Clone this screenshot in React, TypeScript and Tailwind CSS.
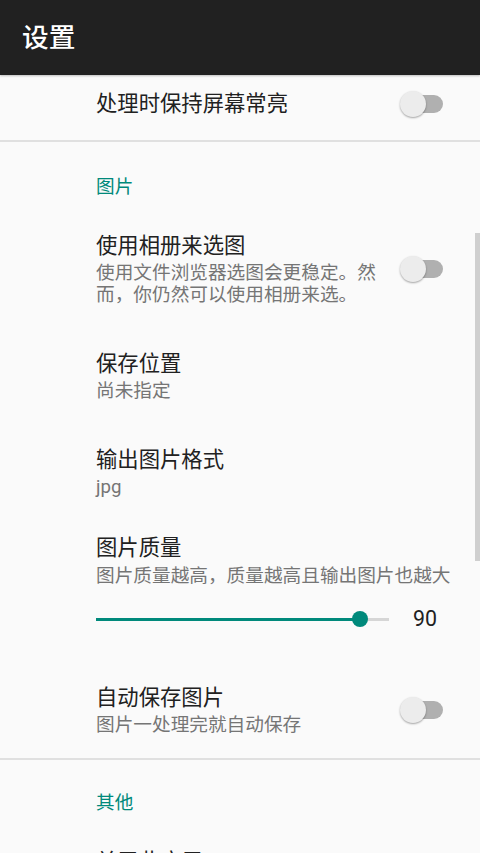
import React from 'react';

const FONT = { fontFamily: 'Roboto, "Noto Sans CJK SC", sans-serif' };

function Switch() {
  return (
    <div className="relative w-[43px] h-[26px]">
      <div className="absolute right-0 top-[4px] w-[38px] h-[18px] rounded-full bg-[#b0b0b0]" />
      <div className="absolute left-0 top-0 w-[26px] h-[26px] rounded-full bg-[#ececec] shadow-[0_1px_2px_rgba(0,0,0,0.35)]" />
    </div>
  );
}

function Title({ children }: { children: React.ReactNode }) {
  return <p className="text-[21.33px] leading-[28px] text-[#212121]">{children}</p>;
}

function Summary({ children }: { children: React.ReactNode }) {
  return <p className="mt-[2px] text-[18.67px] leading-[22px] text-[#757575]">{children}</p>;
}

function Category({ label, top }: { label: string; top: string }) {
  return (
    <div className={`pl-[96px] pb-[11px] ${top}`}>
      <p className="text-[18.67px] leading-[24px] text-[#00897b]">{label}</p>
    </div>
  );
}

function Divider() {
  return <div className="h-[2px] bg-[#e0e0e0]" />;
}

interface PrefProps {
  title: string;
  summary?: string;
  toggle?: boolean;
}

function Pref({ title, summary, toggle }: PrefProps) {
  return (
    <div className="flex items-center pl-[96px] pr-[24px] py-[22px]">
      <div className="flex-1 min-w-0">
        <Title>{title}</Title>
        {summary && <Summary>{summary}</Summary>}
      </div>
      {toggle && (
        <div className="w-[70px] flex items-center justify-end pr-[13px]">
          <Switch />
        </div>
      )}
    </div>
  );
}

function QualityPref() {
  const value = 90;
  return (
    <div className="pl-[96px] pr-[24px] pt-[14px] pb-[23px]">
      <Title>图片质量</Title>
      <p className="mt-[3px] text-[18.67px] leading-[22px] text-[#757575] whitespace-nowrap">
        图片质量越高，质量越高且输出图片也越大
      </p>
      <div className="mt-[12px] h-[40px] flex items-center">
        <div className="relative w-[293px] h-[3px] bg-[#d6d6d6]">
          <div className="h-full bg-[#00897b]" style={{ width: `${value}%` }} />
          <div
            className="absolute top-[-6.5px] w-[16px] h-[16px] -ml-[8px] rounded-full bg-[#00897b]"
            style={{ left: `${value}%` }}
          />
        </div>
        <span className="ml-[24px] text-[21.33px] leading-[28px] text-[#212121]">{value}</span>
      </div>
    </div>
  );
}

export default function App() {
  return (
    <div className="relative h-[853px] overflow-hidden bg-[#fafafa]" style={FONT}>
      <header className="relative z-10 h-[75px] flex items-center pl-[22px] bg-[#212121] shadow-[0_1px_2px_rgba(0,0,0,0.25)]">
        <h1 className="text-[26.67px] font-medium text-white">设置</h1>
      </header>

      <div className="flex items-center pl-[96px] pr-[24px] pt-[15px] pb-[22px]">
        <div className="flex-1">
          <Title>处理时保持屏幕常亮</Title>
        </div>
        <div className="w-[70px] flex items-center justify-end pr-[13px]">
          <Switch />
        </div>
      </div>
      <Divider />

      <Category label="图片" top="pt-[33px]" />
      <Pref title="使用相册来选图" summary="使用文件浏览器选图会更稳定。然而，你仍然可以使用相册来选。" toggle />
      <Pref title="保存位置" summary="尚未指定" />
      <Pref title="输出图片格式" summary="jpg" />
      <QualityPref />
      <Pref title="自动保存图片" summary="图片一处理完就自动保存" toggle />
      <Divider />

      <Category label="其他" top="pt-[31px]" />
      <Pref title="关于此应用" summary="版本信息" />

      <div className="absolute right-0 top-[233px] w-[5px] h-[328px] bg-[#cfcfcf]" />
    </div>
  );
}
